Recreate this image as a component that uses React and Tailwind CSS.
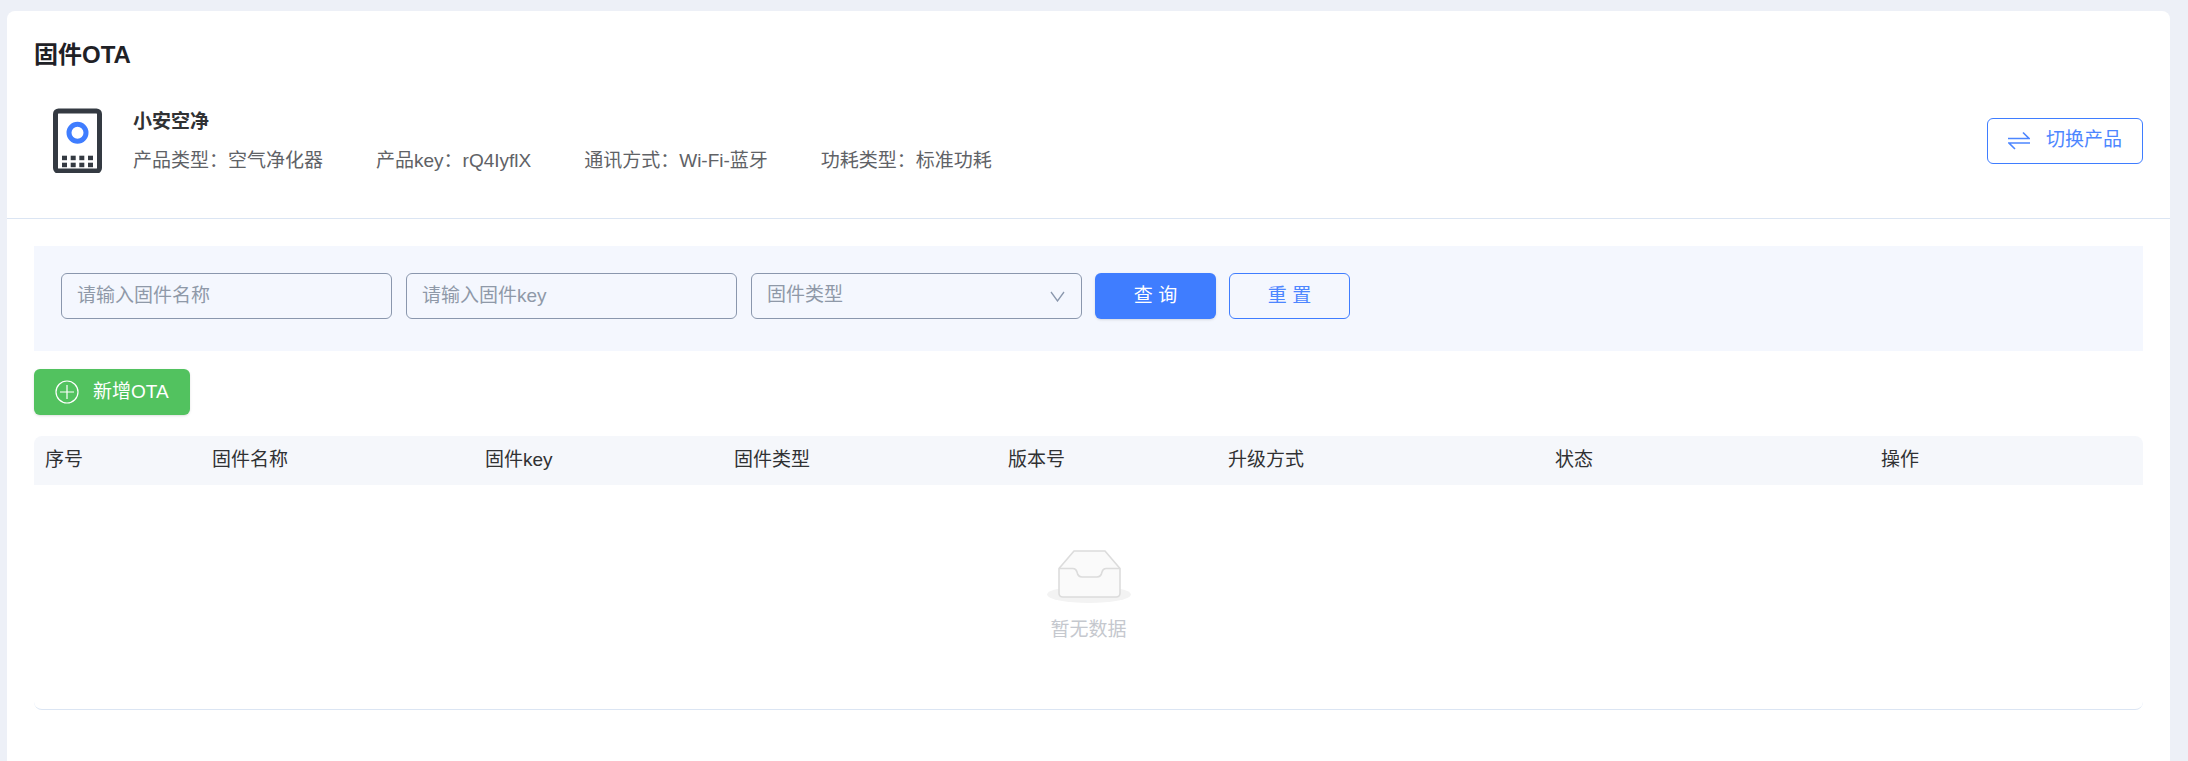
import React from 'react';

const font = 'font-["Liberation_Sans","Noto_Sans_CJK_SC",sans-serif]';

const columns = [
    { label: '序号', width: 'w-[167px]' },
    { label: '固件名称', width: 'w-[273px]' },
    { label: '固件key', width: 'w-[249px]' },
    { label: '固件类型', width: 'w-[274px]' },
    { label: '版本号', width: 'w-[220px]' },
    { label: '升级方式', width: 'w-[327px]' },
    { label: '状态', width: 'w-[326px]' },
    { label: '操作', width: 'flex-1' },
];

const meta = ['产品类型：空气净化器', '产品key：rQ4IyflX', '通讯方式：Wi-Fi-蓝牙', '功耗类型：标准功耗'];

function ProductIcon() {
    const xs = [62, 70.7, 79.3, 88];
    const ys = [155.7, 162.7];
    return (
        <svg width="49" height="65" viewBox="53 108 49 65" fill="none">
            <rect x="55.5" y="111" width="44" height="60" rx="3" stroke="#343a42" strokeWidth="5" />
            <circle cx="77.5" cy="132.7" r="8.5" stroke="#3f7dff" strokeWidth="5" />
            {ys.map((y) => xs.map((x) => <rect key={`${x}-${y}`} x={x} y={y} width="5" height="4.5" fill="#343a42" />))}
        </svg>
    );
}

function SwapIcon() {
    return (
        <svg width="22" height="19" viewBox="0 0 22 19" fill="none" stroke="#4d86ff" strokeWidth="1.6">
            <path d="M0 7.5H21L15 1.5" />
            <path d="M22 12H1L7 18" />
        </svg>
    );
}

function PlusCircle() {
    return (
        <svg width="24" height="24" viewBox="0 0 24 24" fill="none" stroke="#fff" strokeWidth="1.2">
            <circle cx="12" cy="12" r="11" />
            <path d="M12 5V19M5 12H19" />
        </svg>
    );
}

function EmptyIcon() {
    return (
        <svg width="84" height="53" viewBox="0 0 84 53" fill="none">
            <ellipse cx="42" cy="44.5" rx="42" ry="8.5" fill="#f3f3f3" />
            <path d="M12 18.5L27 1H58L73 18.5V43Q73 47 69 47H16Q12 47 12 43Z" fill="#fafafa" stroke="#dcdcdc" strokeWidth="1.6" />
            <path d="M12 18.5H26Q29 18.5 30 22Q31 27 35 27H50Q54 27 55 22Q56 18.5 59 18.5H73" stroke="#dcdcdc" strokeWidth="1.6" />
        </svg>
    );
}

function App() {
    return (
        <div className={`h-screen overflow-hidden bg-[#edf0f7] pt-[11px] pl-[7px] pr-[18px] ${font}`}>
            <div className="h-full rounded-t-lg bg-white">
                <div className="border-b border-[#dbe5f3] px-[27px] pt-[29px] pb-[45px]">
                    <h1 className="text-[24px] leading-[30px] font-bold text-[#1f2126]">固件OTA</h1>
                    <div className="mt-[38px] flex items-center">
                        <div className="ml-[19px]">
                            <ProductIcon />
                        </div>
                        <div className="ml-[31px] flex-1">
                            <div className="text-[19px] leading-[28px] font-bold text-[#303133]">小安空净</div>
                            <div className="mt-[12px] flex gap-[53px] text-[19px] leading-[25px] text-[#606266]">
                                {meta.map((item) => (
                                    <span key={item}>{item}</span>
                                ))}
                            </div>
                        </div>
                        <button className="flex h-[46px] w-[156px] items-center justify-center gap-[16px] rounded-md border border-[#3f7dff] text-[19px] text-[#4d86ff]">
                            <SwapIcon />
                            切换产品
                        </button>
                    </div>
                </div>

                <div className="px-[27px] pt-[27px]">
                    <div className="flex gap-[14px] bg-[#f4f7fe] px-[27px] pt-[27px] pb-[32px]">
                        <input className="h-[46px] w-[331px] rounded-md border border-[#8a97ad] bg-transparent px-[15px] text-[19px] placeholder:text-[#8f99a8]" placeholder="请输入固件名称" />
                        <input className="h-[46px] w-[331px] rounded-md border border-[#8a97ad] bg-transparent px-[15px] text-[19px] placeholder:text-[#8f99a8]" placeholder="请输入固件key" />
                        <div className="flex h-[46px] w-[331px] items-center justify-between rounded-md border border-[#8a97ad] pr-[16px] pl-[15px] text-[19px] text-[#8f99a8]">
                            <span className="-mt-[2px]">固件类型</span>
                            <svg width="15" height="11" viewBox="0 0 15 11" fill="none" stroke="#8a97ad" strokeWidth="1.3">
                                <path d="M1 1L7.5 10L14 1" />
                            </svg>
                        </div>
                        <button className="-ml-px h-[46px] w-[121px] rounded-md bg-[#3f7dff] text-[19px] text-white shadow-sm">查 询</button>
                        <button className="-ml-px h-[46px] w-[121px] rounded-md border border-[#3f7dff] text-[19px] text-[#4d86ff]">重 置</button>
                    </div>

                    <button className="mt-[18px] flex h-[46px] w-[156px] items-center rounded-md bg-[#52c25f] pl-[21px] text-[19px] text-white shadow-sm">
                        <PlusCircle />
                        <span className="ml-[14px]">新增OTA</span>
                    </button>

                    <div className="mt-[21px] overflow-hidden rounded-lg border-b border-[#dbe5f3]">
                        <div className="flex h-[49px] items-center bg-[#f5f7fb] text-[19px] text-[#303133]">
                            {columns.map((col) => (
                                <div key={col.label} className={`${col.width} pl-[11px]`}>
                                    {col.label}
                                </div>
                            ))}
                        </div>
                        <div className="flex h-[224px] flex-col items-center pt-[65px]">
                            <EmptyIcon />
                            <div className="mt-[13px] text-[19px] leading-[28px] text-[#c5c8ce]">暂无数据</div>
                        </div>
                    </div>
                </div>
            </div>
        </div>
    );
}

export default App;
